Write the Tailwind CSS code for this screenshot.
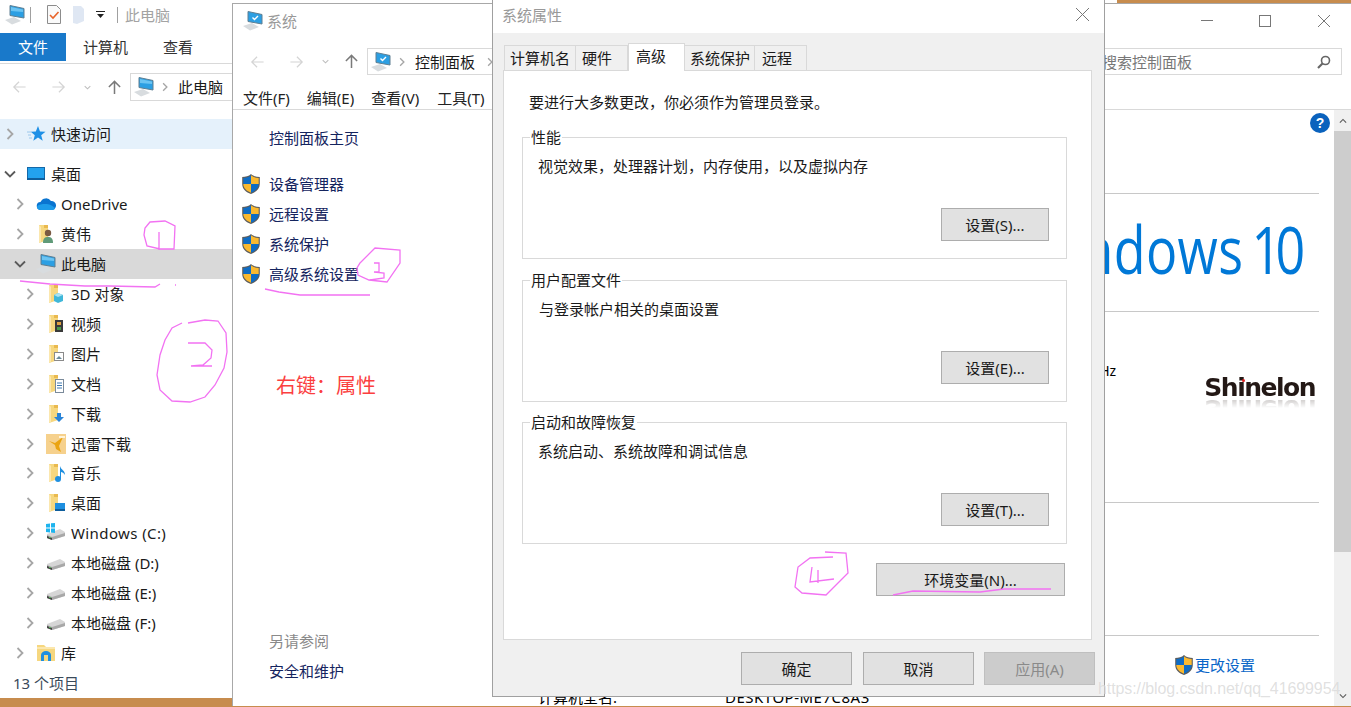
<!DOCTYPE html>
<html lang="zh-CN">
<head>
	<title>系统属性</title>
	<meta charset="utf-8">
	<script src="https://cdn.jsdelivr.net/npm/@tailwindcss/browser@4"></script>
</head>
<body>

	<!-- shared icons -->
	<svg class="hidden">
		<symbol id="pc" viewBox="0 0 20 20">
			<polygon points="0,15 9,12 16,16 7,19.500" fill="#d8dcdf"/>
			<polygon points="5,.5 19,3.500 19,13 5,10.500" fill="#2c9fe3" stroke="#5f7f92" stroke-width="1"/>
			<polygon points="6,2 18,4.500 18,7 6,6" fill="#6cc4f2"/>
		</symbol>
		<symbol id="pc-check" viewBox="0 0 20 20">
			<polygon points="0,15 9,12 16,16 7,19.500" fill="#d8dcdf"/>
			<polygon points="5,.5 19,3.500 19,13 5,10.500" fill="#2c9fe3" stroke="#5f7f92" stroke-width="1"/>
			<path d="M9.500 6.500l2 2 3.500-3.500" fill="none" stroke="#fff" stroke-width="1.400"/>
		</symbol>
		<symbol id="shield" viewBox="2 1 16 18.200">
			<path d="M10 1C8 3 5 3.600 2 3.800V10c0 4.500 3.500 7.500 8 9.200 4.500-1.700 8-4.700 8-9.200V3.800C15 3.600 12 3 10 1z" fill="#5c5c5c"/>
			<path d="M10 2.200V10H3V4.700c2.700-.2 5.200-.8 7-2.500z" fill="#0f6cc4"/>
			<path d="M10 2.200c1.800 1.700 4.300 2.300 7 2.500V10h-7z" fill="#fbb92f"/>
			<path d="M3 10h7v8c-3.800-1.500-7-4.200-7-8z" fill="#fbb92f"/>
			<path d="M17 10h-7v8c3.800-1.500 7-4.200 7-8z" fill="#0f6cc4"/>
		</symbol>
		<symbol id="folder" viewBox="0 0 20 20">
			<path d="M3 1h9v15l-9 3z" fill="#f6d77f"/>
			<path d="M3 1v18l2-1V3z" fill="#fbe7ae"/>
			<path d="M8 1h4v3H8z" fill="#e9b94f"/>
		</symbol>
		<symbol id="drive" viewBox="0 0 20 20">
			<polygon points="1,11 14,6 19,9 19,13 6,17 1,15" fill="#d6d6d6"/>
			<polygon points="1,12 6,14 19,10 19,13 6,17 1,15" fill="#a8a8a8"/>
			<polygon points="1,13 6,15 6,17 1,15" fill="#444"/>
			<rect x="3" y="14" width="2" height="1" fill="#5bb55b"/>
		</symbol>
		<symbol id="chevron" viewBox="0 0 16 16">
			<path d="M5.500 3l5 5-5 5" fill="none" stroke="#a6a6a6" stroke-width="1.800"/>
		</symbol>
		<symbol id="chevron-open" viewBox="0 0 16 16">
			<path d="M3 5.500l5 5 5-5" fill="none" stroke="#5a5a5a" stroke-width="1.800"/>
		</symbol>
		<symbol id="back" viewBox="0 0 16 16">
			<path d="M15 8H1.500M7.500 2L1.500 8l6 6" fill="none" stroke="currentColor" stroke-width="1.400"/>
		</symbol>
		<symbol id="up" viewBox="0 0 16 16">
			<path d="M8 15V1.500M2 7.500l6-6 6 6" fill="none" stroke="currentColor" stroke-width="1.600"/>
		</symbol>
	</svg>

	<div class="relative w-[1351px] h-[707px] overflow-hidden bg-[#c78c4e] text-[15px] leading-5 text-[#1a1a1a] font-['Noto_Sans','Noto_Sans_CJK_SC',sans-serif]">

		<div class="absolute left-[233px] top-0 w-[884px] h-[3px] bg-white"></div>

		<!-- explorer window -->
		<div class="absolute left-0 top-0 w-[233px] h-[698px] bg-white flex flex-col overflow-hidden">
			<div class="h-[33px] flex items-center shrink-0 pb-[4px]">
				<svg class="w-5 h-5 ml-[5px]"><use href="#pc"/></svg>
				<div class="w-px h-[16px] bg-[#a0a0a0] ml-[5px]"></div>
				<svg class="w-[16px] h-[19px] ml-[15px]" viewBox="0 0 16 19">
					<path d="M1.500.5h9l4 4v14h-13z" fill="#fafafa" stroke="#8c8c8c"/>
					<path d="M4 10l3 3 5.500-6" fill="none" stroke="#e8642a" stroke-width="1.600"/>
				</svg>
				<svg class="w-[13px] h-[18px] ml-[10px]" viewBox="0 0 13 18"><path d="M1 0h8l3 3v12l-7 3-4-1z" fill="#dfe7f3"/></svg>
				<svg class="w-[9px] h-[8px] ml-[11px]" viewBox="0 0 9 8"><path d="M0 0h9v1H0zM1 3h7L4.500 7z" fill="#222"/></svg>
				<div class="w-px h-[16px] bg-[#a0a0a0] ml-[12px]"></div>
				<span class="ml-[7px] text-[#a3a3a3]">此电脑</span>
			</div>
			<div class="h-[28px] flex items-center shrink-0 text-[#333]">
				<div class="w-[66px] h-full bg-[#1979ca] text-white flex items-center justify-center">文件</div>
				<span class="ml-[17px]">计算机</span>
				<span class="ml-[35px]">查看</span>
			</div>
			<div class="h-[3px] shrink-0 border-b border-[#d9d9d9]"></div>
			<div class="h-[46px] flex items-center shrink-0">
				<svg class="w-[15px] h-[14px] ml-[12px] text-[#d4d4d4]"><use href="#back"/></svg>
				<svg class="w-[15px] h-[14px] ml-[24px] text-[#d4d4d4] -scale-x-100"><use href="#back"/></svg>
				<svg class="w-[9px] h-[9px] ml-[17px] opacity-40"><use href="#chevron-open"/></svg>
				<svg class="w-[15px] h-[15px] ml-[15px] text-[#7a7a7a]"><use href="#up"/></svg>
				<div class="ml-[8px] flex-1 h-[28px] border border-r-0 border-[#d9d9d9] flex items-center">
					<svg class="w-5 h-5 ml-[3px]"><use href="#pc"/></svg>
					<svg class="w-3 h-3 ml-[5px]"><use href="#chevron"/></svg>
					<span class="ml-[7px]">此电脑</span>
				</div>
			</div>

			<!-- tree -->
			<div class="h-[9px] shrink-0"></div>
			<div class="flex items-center h-[30px] pl-[2px] bg-[#e5f1fb]">
				<svg class="w-4 h-4 shrink-0"><use href="#chevron"/></svg>
				<svg class="w-5 h-5 ml-2 shrink-0" viewBox="0 0 20 20"><path d="M12 2l2 5.500 5.500.3-4.300 3.400 1.500 5.500L12 13.600 7.300 16.700l1.500-5.500-4-3.400 5-.3z" fill="#1e90e6"/><path d="M1 8h4M2 11h3M3 14h3" stroke="#9cc8ec"/></svg>
				<span class="ml-[5px]">快速访问</span>
			</div>
			<div class="h-[10px] shrink-0"></div>
			<div class="flex items-center h-[30px] pl-[2px]">
				<svg class="w-4 h-4 shrink-0"><use href="#chevron-open"/></svg>
				<svg class="w-5 h-5 ml-2 shrink-0" viewBox="0 0 20 20"><rect x="1.500" y="3.500" width="17" height="12" fill="#23a2ee" stroke="#1468a8"/><rect x="1" y="14" width="18" height="2" fill="#0f5e9c"/></svg>
				<span class="ml-[5px]">桌面</span>
			</div>
			<div class="flex items-center h-[30px] pl-[12px]">
				<svg class="w-4 h-4 shrink-0"><use href="#chevron"/></svg>
				<svg class="w-5 h-5 ml-2 shrink-0" viewBox="0 0 20 20"><path d="M5 16a4 4 0 0 1-.5-8A6 6 0 0 1 15 7a4.500 4.500 0 0 1 1 9z" fill="#0a74d0"/><path d="M1 13c1-3 6-3 8-3s6 0 10 4c0 1-1 2-3 2H5c-2 0-4-1-4-3z" fill="#1d9be9"/></svg>
				<span class="ml-[5px]">OneDrive</span>
			</div>
			<div class="flex items-center h-[30px] pl-[12px]">
				<svg class="w-4 h-4 shrink-0"><use href="#chevron"/></svg>
				<svg class="w-5 h-5 ml-2 shrink-0" viewBox="0 0 20 20"><use href="#folder"/><circle cx="12" cy="9" r="3.200" fill="#7a5a42"/><path d="M7 19c0-5 2-6 5-6s5 1 5 6z" fill="#5f9a78"/></svg>
				<span class="ml-[5px]">黄伟</span>
			</div>
			<div class="flex items-center h-[30px] pl-[12px] bg-[#d9d9d9]">
				<svg class="w-4 h-4 shrink-0"><use href="#chevron-open"/></svg>
				<svg class="w-5 h-5 ml-2 shrink-0"><use href="#pc"/></svg>
				<span class="ml-[5px]">此电脑</span>
			</div>
			<div class="flex items-center h-[30px] pl-[22px]">
				<svg class="w-4 h-4 shrink-0"><use href="#chevron"/></svg>
				<svg class="w-5 h-5 ml-2 shrink-0" viewBox="0 0 20 20"><use href="#folder"/><path d="M12 9l5 2v6l-5 2-4-2v-6z" fill="#3fb7d9"/><path d="M8 11l4 2 5-2-5-2z" fill="#a8e2f2"/></svg>
				<span class="ml-[5px]">3D 对象</span>
			</div>
			<div class="flex items-center h-[30px] pl-[22px]">
				<svg class="w-4 h-4 shrink-0"><use href="#chevron"/></svg>
				<svg class="w-5 h-5 ml-2 shrink-0" viewBox="0 0 20 20"><use href="#folder"/><rect x="9" y="6" width="8" height="12" fill="#3a3a3a"/><rect x="11" y="8" width="4" height="3" fill="#e0a040"/><rect x="11" y="13" width="4" height="3" fill="#4a9a4a"/></svg>
				<span class="ml-[5px]">视频</span>
			</div>
			<div class="flex items-center h-[30px] pl-[22px]">
				<svg class="w-4 h-4 shrink-0"><use href="#chevron"/></svg>
				<svg class="w-5 h-5 ml-2 shrink-0" viewBox="0 0 20 20"><use href="#folder"/><rect x="8.500" y="8.500" width="9" height="8" fill="#fff" stroke="#8a8a8a"/><path d="M10 15l3-3 3 3z" fill="#6a8a9a"/></svg>
				<span class="ml-[5px]">图片</span>
			</div>
			<div class="flex items-center h-[30px] pl-[22px]">
				<svg class="w-4 h-4 shrink-0"><use href="#chevron"/></svg>
				<svg class="w-5 h-5 ml-2 shrink-0" viewBox="0 0 20 20"><use href="#folder"/><rect x="9.500" y="5.500" width="8" height="13" fill="#fff" stroke="#7a8a9a"/><path d="M11 9h5M11 11.500h5M11 14h5" stroke="#3c78b0"/></svg>
				<span class="ml-[5px]">文档</span>
			</div>
			<div class="flex items-center h-[30px] pl-[22px]">
				<svg class="w-4 h-4 shrink-0"><use href="#chevron"/></svg>
				<svg class="w-5 h-5 ml-2 shrink-0" viewBox="0 0 20 20"><use href="#folder"/><path d="M11 9h4v4h3l-5 5-5-5h3z" fill="#2a84d8"/></svg>
				<span class="ml-[5px]">下载</span>
			</div>
			<div class="flex items-center h-[30px] pl-[22px]">
				<svg class="w-4 h-4 shrink-0"><use href="#chevron"/></svg>
				<svg class="w-5 h-5 ml-2 shrink-0" viewBox="0 0 20 20"><rect width="20" height="20" fill="#f6d18d"/><path d="M3 7l6 2 8-6-4 9 2 6-5-3-1-4z" fill="#eaa412"/><path d="M13 2h6v2h-6z" fill="#fff3d8"/></svg>
				<span class="ml-[5px]">迅雷下载</span>
			</div>
			<div class="flex items-center h-[30px] pl-[22px]">
				<svg class="w-4 h-4 shrink-0"><use href="#chevron"/></svg>
				<svg class="w-5 h-5 ml-2 shrink-0" viewBox="0 0 20 20"><use href="#folder"/><circle cx="12" cy="16" r="3" fill="#1e8fe0"/><path d="M14 16V3c1 4 5 4 5 9-1-2-3-3-4-3v7z" fill="#1e8fe0"/></svg>
				<span class="ml-[5px]">音乐</span>
			</div>
			<div class="flex items-center h-[30px] pl-[22px]">
				<svg class="w-4 h-4 shrink-0"><use href="#chevron"/></svg>
				<svg class="w-5 h-5 ml-2 shrink-0" viewBox="0 0 20 20"><use href="#folder"/><rect x="9" y="10" width="10" height="8" fill="#1e8fe0"/><rect x="9" y="16" width="10" height="2" fill="#0f5e9c"/></svg>
				<span class="ml-[5px]">桌面</span>
			</div>
			<div class="flex items-center h-[30px] pl-[22px]">
				<svg class="w-4 h-4 shrink-0"><use href="#chevron"/></svg>
				<svg class="w-5 h-5 ml-2 shrink-0" viewBox="0 0 20 20"><use href="#drive"/><path d="M0 1l4-.5v4H0zM5 .3L9 0v4.500H5zM0 5.500h4v4l-4-.5zM5 5.500h4V10l-4-.5z" fill="#1eb4ee"/></svg>
				<span class="ml-[5px] tracking-[0.4px]">Windows (C:)</span>
			</div>
			<div class="flex items-center h-[30px] pl-[22px]">
				<svg class="w-4 h-4 shrink-0"><use href="#chevron"/></svg>
				<svg class="w-5 h-5 ml-2 shrink-0"><use href="#drive"/></svg>
				<span class="ml-[5px]">本地磁盘 (D:)</span>
			</div>
			<div class="flex items-center h-[30px] pl-[22px]">
				<svg class="w-4 h-4 shrink-0"><use href="#chevron"/></svg>
				<svg class="w-5 h-5 ml-2 shrink-0"><use href="#drive"/></svg>
				<span class="ml-[5px]">本地磁盘 (E:)</span>
			</div>
			<div class="flex items-center h-[30px] pl-[22px]">
				<svg class="w-4 h-4 shrink-0"><use href="#chevron"/></svg>
				<svg class="w-5 h-5 ml-2 shrink-0"><use href="#drive"/></svg>
				<span class="ml-[5px]">本地磁盘 (F:)</span>
			</div>
			<div class="flex items-center h-[30px] pl-[12px]">
				<svg class="w-4 h-4 shrink-0"><use href="#chevron"/></svg>
				<svg class="w-5 h-5 ml-2 shrink-0" viewBox="0 0 20 20"><path d="M1 2h7l2 2h9v14H1z" fill="#f6d77f"/><path d="M1 4h18v2H1z" fill="#fbe7ae"/><path d="M5 18v-6a5 4 0 0 1 10 0v6h-3v-6H8v6z" fill="#1e8fe0"/></svg>
				<span class="ml-[5px]">库</span>
			</div>
			<div class="flex items-center h-[30px] pl-[13px] text-[#3a4a5a]">13 个项目</div>
		</div>

		<!-- system window -->
		<div class="absolute left-[232px] top-[3px] w-[1119px] h-[703px] bg-white border-l border-t border-[#a8a8a8] flex flex-col overflow-hidden">
			<div class="h-[33px] shrink-0 flex items-center">
				<svg class="w-5 h-5 ml-[10px]"><use href="#pc-check"/></svg>
				<span class="ml-[4px] text-[#999]">系统</span>
				<svg class="w-[12px] h-px ml-auto" viewBox="0 0 12 1"><rect width="12" height="1" fill="#777"/></svg>
				<svg class="w-[12px] h-[12px] ml-[46px]" viewBox="0 0 12 12"><rect x=".5" y=".5" width="11" height="11" fill="none" stroke="#777"/></svg>
				<svg class="w-[12px] h-[12px] ml-[47px] mr-[21px]" viewBox="0 0 12 12"><path d="M0 0l12 12M12 0L0 12" stroke="#777"/></svg>
			</div>
			<div class="h-[27px] mt-[11px] shrink-0 flex items-center">
				<svg class="w-[15px] h-[14px] ml-[17px] text-[#d4d4d4]"><use href="#back"/></svg>
				<svg class="w-[15px] h-[14px] ml-[24px] text-[#d4d4d4] -scale-x-100"><use href="#back"/></svg>
				<svg class="w-[9px] h-[9px] ml-[17px] opacity-40"><use href="#chevron-open"/></svg>
				<svg class="w-[15px] h-[15px] ml-[14px] text-[#7a7a7a]"><use href="#up"/></svg>
				<div class="ml-[8px] w-[200px] h-full border border-[#d9d9d9] flex items-center">
					<svg class="w-5 h-5 ml-[3px]"><use href="#pc-check"/></svg>
					<svg class="w-3 h-3 ml-[5px]"><use href="#chevron"/></svg>
					<span class="ml-[7px]">控制面板</span>
					<svg class="w-3 h-3 ml-[9px]"><use href="#chevron"/></svg>
				</div>
				<div class="ml-auto mr-[9px] w-[300px] h-full border border-[#d9d9d9] flex items-center justify-between text-[#777] pl-[59px] pr-[10px]">
					<span>搜索控制面板</span>
					<svg class="w-[14px] h-[14px]" viewBox="0 0 14 14"><circle cx="8.500" cy="5.500" r="4" fill="none" stroke="#666" stroke-width="1.600"/><path d="M5.500 8.500L1 13" stroke="#666" stroke-width="2.200"/></svg>
				</div>
			</div>
			<div class="h-[35px] shrink-0 flex items-center border-b border-[#d9d9d9] pl-[10px] text-[#222] pt-[11px]">
				<span>文件(F)</span>
				<span class="ml-[17px]">编辑(E)</span>
				<span class="ml-[17px]">查看(V)</span>
				<span class="ml-[18px]">工具(T)</span>
			</div>

			<div class="flex-1 flex min-h-0">
				<!-- left pane -->
				<div class="w-[259px] shrink-0 flex flex-col text-[#14245e] pl-[36px]">
					<div class="mt-[18px] h-5">控制面板主页</div>
					<div class="mt-[21px] h-[30px] flex items-center -ml-[28px]">
						<svg class="w-[18px] h-5 ml-px"><use href="#shield"/></svg><span class="ml-[9px]">设备管理器</span>
					</div>
					<div class="h-[30px] flex items-center -ml-[28px]">
						<svg class="w-[18px] h-5 ml-px"><use href="#shield"/></svg><span class="ml-[9px]">远程设置</span>
					</div>
					<div class="h-[30px] flex items-center -ml-[28px]">
						<svg class="w-[18px] h-5 ml-px"><use href="#shield"/></svg><span class="ml-[9px]">系统保护</span>
					</div>
					<div class="h-[30px] flex items-center -ml-[28px]">
						<svg class="w-[18px] h-5 ml-px"><use href="#shield"/></svg><span class="ml-[9px]">高级系统设置</span>
					</div>
					<div class="mt-auto h-5 text-[#8a8a8a]">另请参阅</div>
					<div class="mt-[10px] mb-[25px] h-5">安全和维护</div>
				</div>

				<!-- right pane -->
				<div class="flex-1 min-w-0 flex flex-col pr-[15px]">
					<div class="h-[84px] shrink-0 border-b border-[#c8c8c8] flex justify-end items-start">
						<svg class="w-5 h-5 mt-[3px] -mr-[11px]" viewBox="0 0 20 20"><circle cx="10" cy="10" r="10" fill="#0a62bd"/><text x="10" y="15" text-anchor="middle" font-size="14" font-weight="700" fill="#fff" font-family="Liberation Sans">?</text></svg>
					</div>
					<div class="h-[118px] shrink-0 border-b border-[#c8c8c8] flex justify-end items-center pr-[14px]">
						<div class="flex origin-right scale-x-[.8] -translate-y-[3px] text-[#0078d7] text-[65px] leading-none font-normal font-['Open_Sans',sans-serif]">
							<span class="tracking-[0.5px]">Windows</span><span class="ml-[10px] tracking-[-7px] pr-[7px]">10</span>
						</div>
					</div>
					<div class="h-[191px] shrink-0 border-b border-[#c8c8c8] flex justify-between items-start pt-[49px]">
						<span class="text-[14px] text-black ml-[597px] h-5">GHz</span>
						<div class="relative mt-[17px] mr-[4px] h-[20px] text-[25px] leading-5 tracking-[-1.500px] font-bold text-[#231815] font-['DejaVu_Sans',sans-serif] [-webkit-box-reflect:below_0px_linear-gradient(transparent_50%,rgba(0,0,0,.25))]">Shinelon<span class="absolute left-[38px] top-px w-[3px] h-[3px] rounded-full bg-[#e02020]"></span></div>
					</div>
					<div class="h-[133px] shrink-0 border-b border-[#c8c8c8]"></div>
					<div class="flex justify-end mt-[19px] h-5 shrink-0 items-center text-[#0a66c8] pr-[64px]">
						<svg class="w-[18px] h-5 mr-[2px]"><use href="#shield"/></svg><span>更改设置</span>
					</div>
					<div class="flex mt-[12px] h-5 shrink-0 text-black whitespace-nowrap">
						<span class="ml-[46px]">计算机全名:</span>
						<span class="ml-[108px] tracking-[0.5px]">DESKTOP-ME7C8A3</span>
					</div>
				</div>

				<!-- scrollbar -->
				<div class="w-[17px] shrink-0 bg-[#f0f0f0] flex flex-col">
					<div class="h-[21px] flex items-center justify-center">
						<svg class="w-[10px] h-[10px] -scale-y-100"><use href="#chevron-open"/></svg>
					</div>
					<div class="h-[421px] bg-[#cdcdcd]"></div>
					<div class="mt-auto h-[21px] flex items-center justify-center">
						<svg class="w-[10px] h-[10px]"><use href="#chevron-open"/></svg>
					</div>
				</div>
			</div>
		</div>

		<!-- system properties dialog -->
		<div class="absolute left-[492px] top-0 w-[613px] h-[697px] bg-[#f0f0f0] border border-t-0 border-[#a0a0a0] flex flex-col">
			<div class="h-[33px] shrink-0 bg-white flex items-center justify-between pl-[9px] pr-[15px] pb-[4px] text-[#999]">
				<span>系统属性</span>
				<svg class="w-[13px] h-[13px]" viewBox="0 0 13 13"><path d="M0 0l13 13M13 0L0 13" stroke="#777"/></svg>
			</div>
			<div class="h-[37px] shrink-0 flex items-end pl-[11px]">
				<div class="w-[72px] h-[25px] bg-[#f0f0f0] border border-b-0 border-[#d9d9d9] flex items-center justify-center pb-px">计算机名</div>
				<div class="w-[52px] h-[25px] bg-[#f0f0f0] border border-b-0 border-l-0 border-[#d9d9d9] flex items-center pl-[6px] pb-px">硬件</div>
				<div class="w-[57px] h-[28px] -mb-px z-10 bg-white border border-b-0 border-[#d9d9d9] flex items-center pl-[7px] pb-[4px]">高级</div>
				<div class="w-[70px] h-[25px] bg-[#f0f0f0] border border-b-0 border-l-0 border-[#d9d9d9] flex items-center pl-[5px] pb-px">系统保护</div>
				<div class="w-[52px] h-[25px] bg-[#f0f0f0] border border-b-0 border-l-0 border-[#d9d9d9] flex items-center pl-[7px] pb-px">远程</div>
			</div>
			<div class="ml-[10px] mr-[12px] h-[570px] shrink-0 bg-white border border-[#d9d9d9] flex flex-col pl-[18px] pr-[24px]">
				<div class="mt-[21px] h-5 ml-[7px]">要进行大多数更改，你必须作为管理员登录。</div>
				<div class="relative mt-[25px] h-[122px] border border-[#d9d9d9] flex flex-col justify-between pl-[15px] pr-[17px] pb-[17px] pt-[18px]">
					<span class="absolute -top-[11px] left-[7px] px-[1px] bg-white">性能</span>
					<span>视觉效果，处理器计划，内存使用，以及虚拟内存</span>
					<button class="self-end w-[108px] h-[33px] bg-[#e1e1e1] border border-[#adadad]">设置(S)...</button>
				</div>
				<div class="relative mt-[21px] h-[122px] border border-[#d9d9d9] flex flex-col justify-between pl-[16px] pr-[17px] pb-[17px] pt-[18px]">
					<span class="absolute -top-[11px] left-[7px] px-[1px] bg-white">用户配置文件</span>
					<span>与登录帐户相关的桌面设置</span>
					<button class="self-end w-[108px] h-[33px] bg-[#e1e1e1] border border-[#adadad]">设置(E)...</button>
				</div>
				<div class="relative mt-[20px] h-[122px] border border-[#d9d9d9] flex flex-col justify-between pl-[15px] pr-[17px] pb-[17px] pt-[18px]">
					<span class="absolute -top-[11px] left-[7px] px-[1px] bg-white">启动和故障恢复</span>
					<span>系统启动、系统故障和调试信息</span>
					<button class="self-end w-[108px] h-[33px] bg-[#e1e1e1] border border-[#adadad]">设置(T)...</button>
				</div>
				<button class="self-end mt-[19px] mr-[2px] w-[189px] h-[33px] bg-[#e1e1e1] border border-[#adadad]">环境变量(N)...</button>
			</div>
			<div class="flex justify-end mt-[12px] pr-[9px]">
				<button class="w-[111px] h-[33px] bg-[#e1e1e1] border border-[#adadad]">确定</button>
				<button class="ml-[11px] w-[111px] h-[33px] bg-[#e1e1e1] border border-[#adadad]">取消</button>
				<button class="ml-[10px] w-[111px] h-[33px] bg-[#cccccc] border border-[#bfbfbf] text-[#8a8a8a]">应用(A)</button>
			</div>
		</div>

		<!-- red note -->
		<div class="absolute left-[276px] top-[373px] text-[20px] leading-[26px] text-[#fb3f3f]">右键：属性</div>

		<!-- pen marks drawn over the screenshot -->
		<svg class="absolute left-0 top-0 w-[1351px] h-[707px] pointer-events-none" viewBox="0 0 1351 707" fill="none" stroke="#f272f2" stroke-width="1.300">
			<path d="M150 222l15-1 10 5-1 23-14 0-13-3-3-11 1-7zM159 232v18"/>
			<path d="M20 281l30 3 35 2 25 0 45 1 5-3M175 285h1"/>
			<path d="M188 323l17-3 13 1 8 12 1 19-3 16-9 17-10 12-15 5-18-1-12-11-3-15 3-20 5-15 7-12 10-5M188 343h17l7 7-1 8-8 7-12 1h21"/>
			<path d="M360 263l15-15 25 2v13l-13 19-18-2-11-5-1-7zM374 263h5v9h-5l10 1v5l-14 2"/>
			<path d="M265 289l14 3 21 3h70"/>
			<path d="M825 552l21 1 2 20-22 22-24-2-7-6 3-20 12-9 23-1M812 567l-2 15 24-3M818 570v13"/>
			<path d="M893 595l20-4 67 1 24-3h47"/>
		</svg>

		<!-- blog watermark -->
		<div class="absolute left-[1098px] top-[679px] text-[16px] leading-5 tracking-[-0.1px] text-[#b0b0b0]/40 font-['Liberation_Sans',sans-serif] [text-shadow:0_0_1px_rgba(255,255,255,.8)]">https://blog.csdn.net/qq_41699954</div>
	</div>

</body>
</html>
